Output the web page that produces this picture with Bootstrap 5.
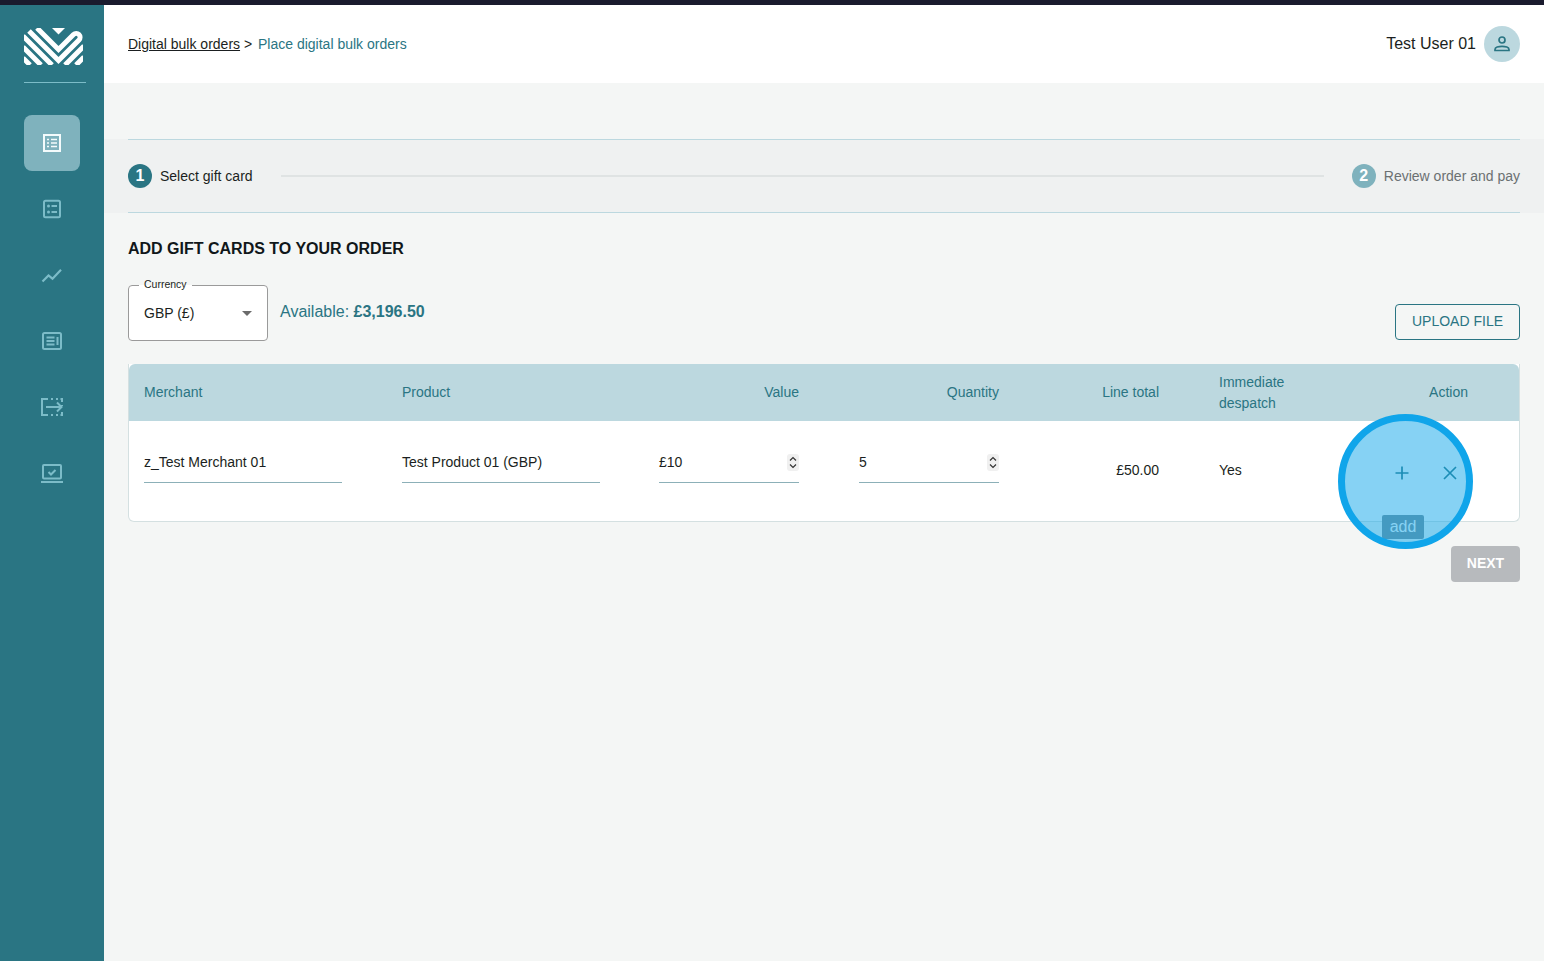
<!doctype html>
<html lang="en">
<head>
<meta charset="utf-8">
<title>Place digital bulk orders</title>
<link href="https://cdn.jsdelivr.net/npm/bootstrap@5.3.0/dist/css/bootstrap.min.css" rel="stylesheet">
<style>
html,body{height:100%}
body{font-family:"Liberation Sans",Arial,sans-serif;background:#f4f6f5;color:#1b1f21;font-size:14px;overflow:hidden}
.topstrip{height:5px;background:#1a1b2e}
.shell{height:956px}
.sidebar{width:104px;background:#2a7583;flex:none}
.logo-wrap{margin:23px 18px 0 24px;height:55px;border-bottom:1px solid #7cbcc8;width:62px}
.logo-wrap svg{display:block}
.side-nav{margin-top:32px;gap:10px;padding-left:24px}
.side-link{width:56px;height:56px;border-radius:8px;color:#7cbcc8}
.side-link.is-on{background:#7fb2bd;color:#f4fbfc}
.topbar{height:78px;background:#fff;padding:0 24px}
.crumb a{color:#1b1f21}
.crumb .here{color:#2a7583;margin-left:2px}
.username{font-size:16px}
.avatar{width:36px;height:36px;background:#bcd8df;color:#2a7583}
.content{padding:56px 24px 0;flex:1;min-width:0}
.band{margin:0 -24px;padding:0 24px;background:#eff1f1}
.band-in{height:74px;border-top:1px solid #bcd8df;border-bottom:1px solid #bcd8df}
.dot{width:24px;height:24px;color:#fff;font-size:16px;font-weight:700;line-height:24px;background:#2a7583}
.dot.off{background:#7fb2bd}
.step-off{color:#6b7072}
.bar-line{height:2px;background:#dfe3e3;margin:0 28px;flex:1}
.heading{font-size:16px;font-weight:700;margin:26px 0 0;line-height:20px;color:#10171a}
.controls{margin-top:17px;height:65px}
.currency{width:140px;height:63px;border:1px solid #9a9a9a;border-radius:4px;background:#fff;padding:0 15px;margin:0;position:relative}
.currency legend{float:none;width:auto;font-size:10.500px;line-height:13px;margin:0 0 0 -5px;padding:0 5px 2px;color:#1b1f21}
.currency-val{line-height:21px;margin-top:10px}
.caret-mark{border-left:5px solid transparent;border-right:5px solid transparent;border-top:5px solid #6b6b6b}
.avail{font-size:16px;line-height:24px;color:#2a7583;margin:24px 0 0 12px}
.btn-upload{height:36px;width:125px;border:1px solid #2a7583;color:#2a7583;border-radius:4px;font-size:14px;background:transparent;padding:0 0 2px;margin-bottom:1px}
.grid-wrap{position:relative;margin-top:23px;border:1px solid #d4e0e1;border-top:0;border-radius:0 0 6px 6px;background:#fff}
.order-table{table-layout:fixed;margin:0;--bs-table-bg:transparent;border-collapse:separate;border-spacing:0}
.order-table th{background:#bcd8df;color:#2a7583;font-weight:400;height:57px;padding:0 16px;vertical-align:middle;border:0;line-height:21px}
.order-table th:first-child{border-top-left-radius:6px;padding-left:15px}
.order-table th:last-child{border-top-right-radius:6px}
.order-table td{height:100px;padding:21px 16px 0;border:0;vertical-align:top;color:#1b1f21}
.order-table td:first-child{padding-left:15px}
.order-table td.mid{vertical-align:middle;padding-top:0;padding-bottom:2px}
.order-table .c-val{padding-right:44px}
.order-table .c-imm{padding-left:44px}
.order-table th.c-act{padding-right:51px;text-align:right}
.order-table td.c-act{padding:4px 45px 0 0;vertical-align:middle}
.entry{height:41px;padding:10px 0;line-height:21px;border-bottom:1px solid #8cb0b8}
.entry-wide{width:198px}
.spin{width:12px;height:17px;border-radius:3px;background:#f0f0f0;color:#333}
.act-btn{width:48px;height:32px;color:#2a7583}
.tip-add{position:absolute;left:1253px;top:151px;width:42px;height:24px;background:#7a8f99;color:#fff;font-size:16px;line-height:24px;border-radius:2px;text-align:center}
.ring{position:absolute;left:1209px;top:50px;width:135px;height:135px;border-radius:50%;border:7px solid #10a5ea;background:rgba(14,165,233,.5);pointer-events:none}
.btn-next{width:69px;height:36px;background:#b7babd;color:#fff;border:0;border-radius:4px;font-weight:700;font-size:14px;padding:0 0 2px;margin-top:24px}
</style>
</head>
<body>
<div class="topstrip"></div>
<div class="shell d-flex">
  <aside class="sidebar d-flex flex-column">
    <div class="logo-wrap">
      <svg width="59" height="37" viewBox="0 0 59 37" aria-label="Logo">
        <defs><clipPath id="lc"><path d="M0 3a3 3 0 0 1 3-3h53a3 3 0 0 1 3 3v31a3 3 0 0 1-3 3H3a3 3 0 0 1-3-3z"/></clipPath></defs>
        <g clip-path="url(#lc)" fill="none" stroke="#fff" stroke-width="5">
          <path d="M13 0 L34.500 21.500 L49.500 6.500 A3.890 3.890 0 0 1 55 12 L34.500 32.500 L5 3"/>
          <path d="M-1 8 L28 37M60 18 L41 37"/>
          <path d="M-1 19 L17 37M60 29 L52 37"/>
          <path d="M-1 30 L6 37"/>
        </g>
        <path d="M28 0H41L34.500 6.500Z" fill="#fff"/>
      </svg>
    </div>
    <nav class="side-nav d-flex flex-column">
      <a class="side-link is-on d-flex align-items-center justify-content-center" href="#" aria-label="Orders">
        <svg width="24" height="24" viewBox="0 0 24 24" fill="none" stroke="currentColor" stroke-width="2"><rect x="4" y="4" width="16" height="16"/><path d="M7 8.500h2M11 8.500h6M7 12h2M11 12h6M7 15.500h2M11 15.500h6" stroke-width="1.700"/></svg>
      </a>
      <a class="side-link d-flex align-items-center justify-content-center" href="#" aria-label="Lists">
        <svg width="24" height="24" viewBox="0 0 24 24" fill="none" stroke="currentColor" stroke-width="2"><rect x="4" y="3.800" width="16" height="16.400" rx="1.500"/><path d="M11.500 9h5.500M11.500 15h5.500"/><circle cx="8.500" cy="9" r="1.500" fill="currentColor" stroke="none"/><circle cx="8.500" cy="15" r="1.500" fill="currentColor" stroke="none"/></svg>
      </a>
      <a class="side-link d-flex align-items-center justify-content-center" href="#" aria-label="Reports">
        <svg width="24" height="24" viewBox="0 0 24 24" fill="none" stroke="currentColor" stroke-width="2.200"><path d="M2.500 18.500l6-6 4 3.200 8.500-9"/></svg>
      </a>
      <a class="side-link d-flex align-items-center justify-content-center" href="#" aria-label="Statements">
        <svg width="24" height="24" viewBox="0 0 24 24" fill="none" stroke="currentColor" stroke-width="2"><rect x="3" y="4" width="18" height="16" rx="1.500"/><path d="M6.500 8.500h8M6.500 12h8M6.500 15.500h8M17.500 8v8"/></svg>
      </a>
      <a class="side-link d-flex align-items-center justify-content-center" href="#" aria-label="Transfers">
        <svg width="24" height="24" viewBox="0 0 24 24" fill="none" stroke="currentColor" stroke-width="2"><path d="M8 4H2v16h6M11 4h2M11 20h2M16 4h2M16 20h2M20.500 4h1.500v3M22 10v1M22 17v3h-1.500M6 12h15.500M17 7.500L21.500 12 17 16.500"/></svg>
      </a>
      <a class="side-link d-flex align-items-center justify-content-center" href="#" aria-label="Completed">
        <svg width="24" height="24" viewBox="0 0 24 24" fill="none" stroke="currentColor" stroke-width="2"><rect x="3" y="4" width="18" height="13.500" rx="1"/><path d="M1 21h22"/><path d="M8.500 11l2.500 2.500 4.500-4.500"/></svg>
      </a>
    </nav>
  </aside>
  <div class="flex-grow-1 d-flex flex-column" style="min-width:0">
    <header class="topbar d-flex align-items-center justify-content-between">
      <div class="crumb"><a href="#">Digital bulk orders</a> &gt; <span class="here">Place digital bulk orders</span></div>
      <div class="d-flex align-items-center gap-2">
        <span class="username">Test User 01</span>
        <span class="avatar rounded-circle d-flex align-items-center justify-content-center">
          <svg width="18" height="18" viewBox="0 0 18 18" fill="none" stroke="currentColor" stroke-width="1.700"><circle cx="9" cy="5" r="3"/><path d="M2 15.500v-1c0-2 3.500-3.200 7-3.200s7 1.200 7 3.200v1z"/></svg>
        </span>
      </div>
    </header>
    <main class="content">
      <div class="band">
        <div class="band-in d-flex align-items-center">
          <span class="dot rounded-circle text-center">1</span>
          <span class="ms-2">Select gift card</span>
          <span class="bar-line"></span>
          <span class="dot off rounded-circle text-center">2</span>
          <span class="ms-2 step-off">Review order and pay</span>
        </div>
      </div>
      <h1 class="heading">ADD GIFT CARDS TO YOUR ORDER</h1>
      <div class="controls d-flex align-items-end">
        <fieldset class="currency">
          <legend>Currency</legend>
          <div class="currency-val d-flex align-items-center justify-content-between"><span>GBP (£)</span><span class="caret-mark"></span></div>
        </fieldset>
        <div class="avail align-self-start">Available: <strong>£3,196.50</strong></div>
        <button class="btn btn-upload ms-auto" type="button">UPLOAD FILE</button>
      </div>
      <div class="grid-wrap">
        <table class="table order-table">
          <colgroup><col style="width:257px"><col style="width:257px"><col style="width:200px"><col style="width:172px"><col style="width:160px"><col style="width:160px"><col></colgroup>
          <thead>
            <tr><th>Merchant</th><th>Product</th><th class="text-end c-val">Value</th><th class="text-end">Quantity</th><th class="text-end">Line total</th><th class="c-imm">Immediate despatch</th><th class="c-act">Action</th></tr>
          </thead>
          <tbody>
            <tr>
              <td><div class="entry entry-wide">z_Test Merchant 01</div></td>
              <td><div class="entry entry-wide">Test Product 01 (GBP)</div></td>
              <td class="c-val"><div class="entry d-flex align-items-center justify-content-between"><span>£10</span><span class="spin d-flex"><svg width="12" height="17" viewBox="0 0 12 17" fill="none" stroke="currentColor" stroke-width="1.200"><path d="M3 6.500l3-3 3 3M3 10.500l3 3 3-3"/></svg></span></div></td>
              <td><div class="entry d-flex align-items-center justify-content-between"><span>5</span><span class="spin d-flex"><svg width="12" height="17" viewBox="0 0 12 17" fill="none" stroke="currentColor" stroke-width="1.200"><path d="M3 6.500l3-3 3 3M3 10.500l3 3 3-3"/></svg></span></div></td>
              <td class="mid text-end">£50.00</td>
              <td class="mid c-imm">Yes</td>
              <td class="c-act">
                <div class="d-flex justify-content-end">
                  <span class="act-btn d-flex align-items-center justify-content-center"><svg width="16" height="16" viewBox="0 0 16 16" fill="none" stroke="currentColor" stroke-width="1.700"><path d="M8 1.500v13M1.500 8h13"/></svg></span>
                  <span class="act-btn d-flex align-items-center justify-content-center"><svg width="16" height="16" viewBox="0 0 16 16" fill="none" stroke="currentColor" stroke-width="1.700"><path d="M2 2l12 12M14 2L2 14"/></svg></span>
                </div>
              </td>
            </tr>
          </tbody>
        </table>
        <span class="tip-add">add</span>
        <span class="ring"></span>
      </div>
      <div class="d-flex justify-content-end"><button class="btn-next" type="button">NEXT</button></div>
    </main>
  </div>
</div>
<script src="https://cdn.jsdelivr.net/npm/bootstrap@5.3.0/dist/js/bootstrap.bundle.min.js"></script>
</body>
</html>
